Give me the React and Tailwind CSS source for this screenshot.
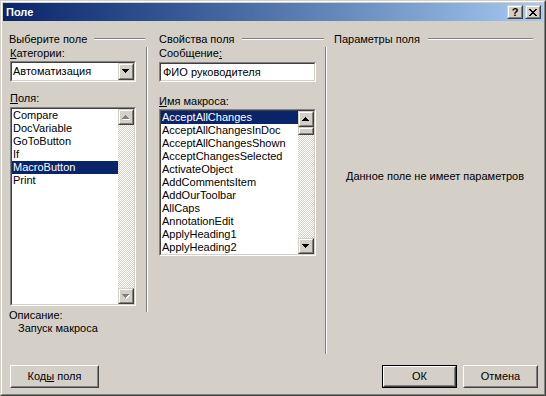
import React from "react";

const FONT = "font-['Liberation_Sans',Arial,sans-serif]";

function Arrow({ dir = "down", disabled = false }) {
  const widths = [7, 5, 3, 1];
  const rects = widths.map((w, i) => ({ x: i, y: dir === "down" ? i : 3 - i, w }));
  return (
    <svg width="8" height="5" viewBox="0 0 8 5" shapeRendering="crispEdges">
      {disabled &&
        rects.map((r, i) => (
          <rect key={"s" + i} x={r.x + 1} y={r.y + 1} width={r.w} height="1" fill="#ffffff" />
        ))}
      {rects.map((r, i) => (
        <rect key={i} x={r.x} y={r.y} width={r.w} height="1" fill={disabled ? "#808080" : "#000000"} />
      ))}
    </svg>
  );
}

function RaisedSmall({ className = "", children }) {
  return (
    <div
      className={`border border-t-[#D4D0C8] border-l-[#D4D0C8] border-r-[#404040] border-b-[#404040] bg-[#D4D0C8] ${className}`}
    >
      <div className="w-full h-full border border-t-white border-l-white border-r-[#808080] border-b-[#808080] flex items-center justify-center">
        {children}
      </div>
    </div>
  );
}

function Sunken({ className = "", children }) {
  return (
    <div
      className={`border border-t-[#808080] border-l-[#808080] border-r-white border-b-white ${className}`}
    >
      <div className="w-full h-full border border-t-[#404040] border-l-[#404040] border-r-[#D4D0C8] border-b-[#D4D0C8] bg-white flex overflow-hidden">
        {children}
      </div>
    </div>
  );
}

function ScrollBar({ disabled = false, thumb = false }) {
  return (
    <div className="w-[16px] h-full flex flex-col shrink-0">
      <RaisedSmall className="w-[16px] h-[16px] shrink-0">
        <Arrow dir="up" disabled={disabled} />
      </RaisedSmall>
      <div className="flex-1 bg-[image:repeating-conic-gradient(#ffffff_0_25%,#d4d0c8_0_50%)] bg-[length:2px_2px]">
        {thumb && <RaisedSmall className="w-[16px] h-[8px]" />}
      </div>
      <RaisedSmall className="w-[16px] h-[16px] shrink-0">
        <Arrow dir="down" disabled={disabled} />
      </RaisedSmall>
    </div>
  );
}

function ListBox({ items, selected, className, disabled, thumb }) {
  return (
    <Sunken className={className}>
      <div className="flex-1 flex flex-col min-w-0">
        {items.map((it, i) => (
          <div
            key={it}
            className={`h-[13px] leading-[13px] pl-[1px] whitespace-nowrap ${
              i === selected ? "bg-[#0A246A] text-white" : "text-black"
            }`}
          >
            {it}
          </div>
        ))}
      </div>
      <ScrollBar disabled={disabled} thumb={thumb} />
    </Sunken>
  );
}

function Heading({ text, lineClass }) {
  return (
    <div className="flex h-[13px] leading-[13px]">
      <span className="whitespace-nowrap">{text}</span>
      <div className={`flex-1 self-start mt-[5px] h-[2px] border-t border-t-[#808080] border-b border-b-white ${lineClass}`} />
    </div>
  );
}

function Separator({ h }) {
  return <div className={`w-[2px] ${h} border-l border-l-[#808080] border-r border-r-white shrink-0`} />;
}

function PushButton({ children, className = "", isDefault = false }) {
  const inner = (
    <div className="w-full h-full border border-t-white border-l-white border-r-[#404040] border-b-[#404040]">
      <div className="w-full h-full border border-t-[#D4D0C8] border-l-[#D4D0C8] border-r-[#808080] border-b-[#808080] flex items-center justify-center leading-[13px]">
        {children}
      </div>
    </div>
  );
  if (isDefault) {
    return <div className={`border border-black ${className}`}>{inner}</div>;
  }
  return <div className={className}>{inner}</div>;
}

export default function App() {
  const fields = ["Compare", "DocVariable", "GoToButton", "If", "MacroButton", "Print"];
  const macros = [
    "AcceptAllChanges",
    "AcceptAllChangesInDoc",
    "AcceptAllChangesShown",
    "AcceptChangesSelected",
    "ActivateObject",
    "AddCommentsItem",
    "AddOurToolbar",
    "AllCaps",
    "AnnotationEdit",
    "ApplyHeading1",
    "ApplyHeading2",
  ];
  return (
    <div className={`w-[546px] h-[396px] ${FONT} text-[11px] text-black select-none`}>
      <div className="w-full h-full border border-t-[#D4D0C8] border-l-[#D4D0C8] border-r-[#404040] border-b-[#404040] bg-[#D4D0C8]">
        <div className="w-full h-full border border-t-white border-l-white border-r-[#808080] border-b-[#808080] p-[1px] flex flex-col">
          {/* Title bar */}
          <div className="h-[18px] shrink-0 flex items-center bg-gradient-to-r from-[#0A246A] to-[#A6CAF0] pl-[3px] pr-[2px]">
            <span className="text-white font-bold leading-[13px] flex-1">Поле</span>
            <RaisedSmall className="w-[16px] h-[14px]">
              <span className="font-bold text-[11px] leading-[11px] text-black">?</span>
            </RaisedSmall>
            <RaisedSmall className="w-[16px] h-[14px] ml-[2px]">
              <svg width="8" height="7" viewBox="0 0 8 7" shapeRendering="crispEdges">
                <path d="M0 0h2v1H0zM6 0h2v1H6zM1 1h2v1H1zM5 1h2v1H5zM2 2h4v1H2zM3 3h2v1H3zM2 4h4v1H2zM1 5h2v1H1zM5 5h2v1H5zM0 6h2v1H0zM6 6h2v1H6z" fill="#000" />
              </svg>
            </RaisedSmall>
          </div>

          {/* Content */}
          <div className="flex-1 flex flex-col">
            <div className="flex pt-[12px]">
              {/* Column 1 */}
              <div className="w-[145px] shrink-0 pl-[6px] flex flex-col">
                <Heading text="Выберите поле" lineClass="ml-[7px] mr-[3px]" />
                <div className="flex mt-[1px]">
                  <div className="w-[127px] flex flex-col">
                    <div className="h-[13px] leading-[13px] pl-[1px]">
                      <span className="underline">К</span>атегории:
                    </div>
                    <Sunken className="mt-[1px] h-[21px] ml-[1px] w-[126px]">
                      <div className="flex-1 leading-[17px] pl-[1px]">Автоматизация</div>
                      <RaisedSmall className="w-[16px] h-[17px] shrink-0">
                        <Arrow dir="down" />
                      </RaisedSmall>
                    </Sunken>
                    <div className="mt-[10px] h-[13px] leading-[13px] pl-[1px]">
                      <span className="underline">П</span>оля:
                    </div>
                    <ListBox
                      items={fields}
                      selected={4}
                      disabled
                      className="mt-[2px] h-[199px] ml-[1px] w-[126px]"
                    />
                    <div className="mt-[3px] h-[13px] leading-[13px]">Описание:</div>
                    <div className="h-[13px] leading-[13px] pl-[9px]">Запуск макроса</div>
                  </div>
                  <div className="flex-1" />
                  <Separator h="h-[265px]" />
                </div>
              </div>

              {/* Column 2 */}
              <div className="w-[179px] shrink-0 pl-[11px] flex flex-col">
                <Heading text="Свойства поля" lineClass="ml-[7px] mr-[3px]" />
                <div className="flex mt-[1px]">
                  <div className="w-[157px] flex flex-col">
                    <div className="h-[13px] leading-[13px]">
                      Сообщение<span className="underline">:</span>
                    </div>
                    <Sunken className="mt-[2px] h-[20px] w-[157px]">
                      <div className="flex-1 leading-[16px] pl-[2px]">ФИО руководителя</div>
                    </Sunken>
                    <div className="mt-[13px] h-[13px] leading-[13px]">
                      <span className="underline">И</span>мя макроса:
                    </div>
                    <ListBox
                      items={macros}
                      selected={0}
                      thumb
                      className="mt-[1px] h-[147px] w-[157px]"
                    />
                  </div>
                  <div className="flex-1" />
                  <Separator h="h-[307px]" />
                </div>
              </div>

              {/* Column 3 */}
              <div className="flex-1 pl-[7px] pr-[10px] flex flex-col">
                <Heading text="Параметры поля" lineClass="ml-[8px]" />
                <div className="mt-[1px] h-[307px] pt-[123px] text-center leading-[13px] pl-[3px]">
                  Данное поле не имеет параметров
                </div>
              </div>
            </div>

            {/* Buttons */}
            <div className="flex mt-[11px] pl-[7px] pr-[5px]">
              <PushButton className="w-[89px] h-[23px]">
                <span>
                  Код<span className="underline">ы</span> поля
                </span>
              </PushButton>
              <div className="flex-1" />
              <PushButton isDefault className="w-[75px] h-[23px]">
                ОК
              </PushButton>
              <PushButton className="w-[75px] h-[23px] ml-[6px]">Отмена</PushButton>
            </div>
          </div>
        </div>
      </div>
    </div>
  );
}
